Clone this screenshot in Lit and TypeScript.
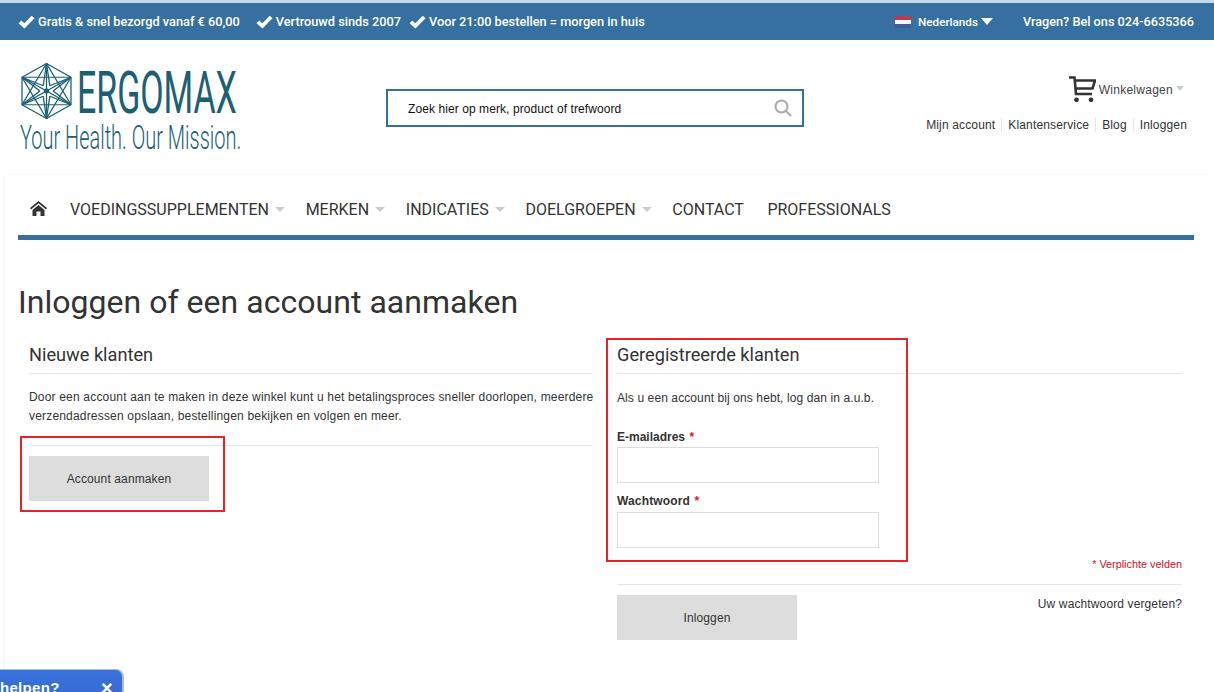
import { LitElement, html, css, svg } from "lit";
import { customElement } from "lit/decorators.js";

const check = html`<svg class="check" viewBox="0 0 16 14" width="17" height="14"><path d="M0 8.2 L2.8 5.6 L5.8 8.2 L13.2 0.8 L16 3.2 L6 13.6 Z" fill="#fff"/></svg>`;

function hexLogo() {
  const pts: [number, number][] = [];
  const mid: [number, number][] = [];
  for (let i = 0; i < 6; i++) {
    const a = (Math.PI / 3) * i - Math.PI / 2;
    pts.push([28 + 25.5 * Math.cos(a), 28 + 27.5 * Math.sin(a)]);
    const b = a + Math.PI / 6;
    mid.push([28 + 6 * Math.cos(b), 28 + 6 * Math.sin(b)]);
  }
  const lines: unknown[] = [];
  const l = (p: number[], q: number[]) => svg`<line x1=${p[0]} y1=${p[1]} x2=${q[0]} y2=${q[1]} />`;
  for (let i = 0; i < 6; i++) {
    lines.push(l(pts[i], pts[(i + 1) % 6]));
    lines.push(l(pts[i], pts[(i + 2) % 6]));
    lines.push(l(pts[i], [28, 28]));
    lines.push(l(pts[i], mid[i]));
    lines.push(l(pts[i], mid[(i + 5) % 6]));
  }
  return html`<svg class="hex" viewBox="5 0 46 56" preserveAspectRatio="none" width="51" height="56"><g stroke="#1d6074" stroke-width="1.15" fill="none">${lines}</g><circle cx="28" cy="28" r="2.4" fill="#1d6074"/></svg>`;
}

@customElement("app-root")
export class AppRoot extends LitElement {
  static styles = css`
    :host { display: block; position: relative; width: 1214px; height: 692px; overflow: hidden; background: #fff; font-family: "Liberation Sans", Arial, sans-serif; color: #333; font-size: 12px; }
    .top { height: 37px; border-top: 3px solid #c8d6e8; background: #3670a0; display: flex; align-items: center; padding: 0 20px 0 18px; color: #fff; font-family: Roboto, sans-serif; font-weight: 500; font-size: 12.75px; }
    .top .usp { display: flex; align-items: center; gap: 3px; margin-right: 16px; white-space: nowrap; }
    .top .usp.b { margin-right: 8px; }
    .check { flex: none; }
    .lang { margin-left: auto; display: flex; align-items: center; font-size: 11.7px; }
    .flag { width: 16px; height: 12px; margin-right: 7px; background: linear-gradient(#c0394b 0 33%, #fff 33% 66%, #3f5c9a 66%); opacity: .95; }
    .caret-w { width: 0; height: 0; border: 6px solid transparent; border-top: 7px solid #fff; border-bottom: 0; margin-left: 3px; }
    .phone { margin-left: 30px; font-size: 12.7px; }

    .head { height: 135px; display: flex; position: relative; }
    .logo { margin: 23px 0 0 21px; width: 365px; flex: none; color: #1d6074; font-family: Roboto, sans-serif; }
    .logo-top { display: flex; align-items: center; height: 56px; }
    .hex { flex: none; }
    .brand { font-size: 60px; font-weight: 400; line-height: 44px; transform-origin: left center; transform: scaleX(.565); white-space: nowrap; margin-left: 5px; width: 160px; margin-top: 3px; }
    .tag { font-size: 34px; font-weight: 300; line-height: 36px; transform-origin: left top; transform: scaleX(.587); white-space: nowrap; margin: 0 0 0 -1px; width: 240px; }
    .search { margin-top: 49px; width: 418px; height: 38px; box-sizing: border-box; border: 2px solid #3670a0; display: flex; align-items: center; padding: 0 10px 0 20px; justify-content: space-between; color: #111; flex: none; }
    .search span { letter-spacing: .08px; padding-top: 2px; }
    .right { margin-left: auto; padding: 36px 27px 0 0; display: flex; flex-direction: column; align-items: flex-end; }
    .cart { display: flex; align-items: center; font-size: 12px; color: #444; margin-right: 3px; letter-spacing: .27px; }
    .cart svg { margin-right: 3px; }
    .cart span { padding-top: 1px; }
    .caret-g { width: 0; height: 0; border: 4.5px solid transparent; border-top: 5px solid #ccc; border-bottom: 0; margin-left: 3px; margin-bottom: 3px; }
    .links { display: flex; margin-top: 15px; color: #333; letter-spacing: .15px; }
    .links span + span { margin-left: 6px; padding-left: 6px; border-left: 1px solid #e6e6e6; }

    .page { margin-left: 5px; box-shadow: -1px 0 2px rgba(0,0,0,.06); height: 517px; padding: 0 20px 0 13px; position: relative; }
    .nav { border-bottom: 5px solid #3670a0; display: flex; align-items: center; font-family: Roboto, sans-serif; font-size: 16px; color: #333; padding: 9px 0 0 12px; box-sizing: content-box; height: 51px; }
    .nav .home { margin-right: 23px; margin-top: -3px; display: block; }
    .nav .item { display: flex; align-items: center; white-space: nowrap; }
    .nav .caret { width: 0; height: 0; border: 5.5px solid transparent; border-top: 5px solid #ccc; border-bottom: 0; margin-left: 6px; }
    .nav .item.plain { margin-right: 23.5px; }
    .nav .item.has { margin-right: 20.7px; }
    h1 { margin: 42px 0 0; font: 400 32px/40px Roboto, sans-serif; color: #333; letter-spacing: .03px; }
    .cols { display: flex; margin-top: 15px; padding-left: 11px; }
    .col { width: 564px; flex: none; }
    .col + .col { margin-left: 24px; width: 565px; }
    h2 { margin: 0; font: 400 18.2px/36px Roboto, sans-serif; color: #333; border-bottom: 1px solid #e6e6e6; box-sizing: border-box; height: 37px; }
    p { margin: 0; line-height: 19px; }
    .intro { margin-top: 14px; padding-bottom: 19px; border-bottom: 1px solid #e6e6e6; letter-spacing: .183px; white-space: nowrap; }
    .btn { width: 180px; height: 45px; background: #ddd; display: flex; align-items: center; justify-content: center; color: #333; margin-top: 10px; letter-spacing: .12px; }
    .reg { margin-top: 15px; letter-spacing: .1px; }
    .field-label { font-weight: 700; margin-top: 19px; height: 20px; line-height: 20px; }
    .field-label.pw { margin-top: 8px; height: 21px; letter-spacing: .15px; }
    .star { color: #e8112d; margin-left: 1px; }
    .input { width: 262px; height: 36px; box-sizing: border-box; border: 1px solid #ddd; background: #fff; }
    .req { text-align: right; color: #d0112b; font-size: 10.85px; margin-top: 10px; line-height: 12px; border-bottom: 1px solid #e6e6e6; height: 26px; }
    .foot { display: flex; justify-content: space-between; align-items: flex-start; }
    .forgot { margin-top: 12px; color: #333; letter-spacing: .12px; }
    .mark { position: absolute; border: 2px solid #e5232a; box-sizing: border-box; pointer-events: none; }
    .m1 { left: 20px; top: 436px; width: 205px; height: 76px; }
    .m2 { left: 606px; top: 338px; width: 302px; height: 224px; }
    .chat { position: absolute; left: 0; top: 669px; width: 124px; height: 40px; background: linear-gradient(#3a72dc, #3567d2); border-right: 2px solid #b5bcc6; border-top: 1px solid #a9b8d6; border-top-right-radius: 8px; box-sizing: border-box; color: #fff; font: 700 15px/20px "Liberation Sans", sans-serif; padding: 8px 0 0 0; white-space: nowrap; display: flex; }
    .chat .t { margin-left: 0; letter-spacing: .3px; }
    .chat .x { position: absolute; left: 101px; top: 8px; font-size: 20px; }
  `;

  render() {
    const navs: [string, boolean][] = [["VOEDINGSSUPPLEMENTEN", true], ["MERKEN", true], ["INDICATIES", true], ["DOELGROEPEN", true], ["CONTACT", false], ["PROFESSIONALS", false]];
    return html`
      <div class="top">
        <div class="usp">${check}<span>Gratis &amp; snel bezorgd vanaf € 60,00</span></div>
        <div class="usp b">${check}<span>Vertrouwd sinds 2007</span></div>
        <div class="usp">${check}<span>Voor 21:00 bestellen = morgen in huis</span></div>
        <div class="lang"><div class="flag"></div>Nederlands<div class="caret-w"></div></div>
        <div class="phone">Vragen? Bel ons 024-6635366</div>
      </div>
      <div class="head">
        <div class="logo">
          <div class="logo-top">${hexLogo()}<div class="brand">ERGOMAX</div></div>
          <div class="tag">Your Health. Our Mission.</div>
        </div>
        <div class="search">
          <span>Zoek hier op merk, product of trefwoord</span>
          <svg width="18" height="18" viewBox="0 0 18 18" fill="none" stroke="#aaa" stroke-width="2"><circle cx="7.5" cy="7.5" r="6"/><path d="M12 12 L17 17"/></svg>
        </div>
        <div class="right">
          <div class="cart">
            <svg width="27" height="27" viewBox="0 0 27 27" fill="none" stroke="#333" stroke-width="2.6"><path d="M0 1.5 H5.5 L7 18 H23"/><path d="M6 4.5 H26 L23.5 12.5 H7"/><circle cx="7.5" cy="23.8" r="2.4" fill="#333" stroke="none"/><circle cx="22" cy="23.8" r="2.4" fill="#333" stroke="none"/></svg>
            <span>Winkelwagen</span><div class="caret-g"></div>
          </div>
          <div class="links"><span>Mijn account</span><span>Klantenservice</span><span>Blog</span><span>Inloggen</span></div>
        </div>
      </div>
      <div class="page">
        <div class="nav">
          <svg class="home" width="17" height="15" viewBox="0 0 17 15" fill="#333"><path d="M8.5 0 L17 7 L16 8.4 L8.5 2.3 L1 8.4 L0 7 Z"/><path d="M8.5 4 L14.5 9 V15 H10.5 V10.5 H6.5 V15 H2.5 V9 Z"/></svg>
          ${navs.map(([t, c]) => html`<div class="item ${c ? "has" : "plain"}">${t}${c ? html`<div class="caret"></div>` : ""}</div>`)}
        </div>
        <h1>Inloggen of een account aanmaken</h1>
        <div class="cols">
          <div class="col">
            <h2>Nieuwe klanten</h2>
            <p class="intro">Door een account aan te maken in deze winkel kunt u het betalingsproces sneller doorlopen, meerdere<br>verzendadressen opslaan, bestellingen bekijken en volgen en meer.</p>
            <div class="btn">Account aanmaken</div>
          </div>
          <div class="col">
            <h2>Geregistreerde klanten</h2>
            <p class="reg">Als u een account bij ons hebt, log dan in a.u.b.</p>
            <div class="field-label">E-mailadres <span class="star">*</span></div>
            <div class="input"></div>
            <div class="field-label pw">Wachtwoord <span class="star">*</span></div>
            <div class="input"></div>
            <div class="req">* Verplichte velden</div>
            <div class="foot"><div class="btn">Inloggen</div><div class="forgot">Uw wachtwoord vergeten?</div></div>
          </div>
        </div>
      </div>
      <div class="mark m1"></div>
      <div class="mark m2"></div>
      <div class="chat"><span class="t">helpen?</span><span class="x">×</span></div>
    `;
  }
}
